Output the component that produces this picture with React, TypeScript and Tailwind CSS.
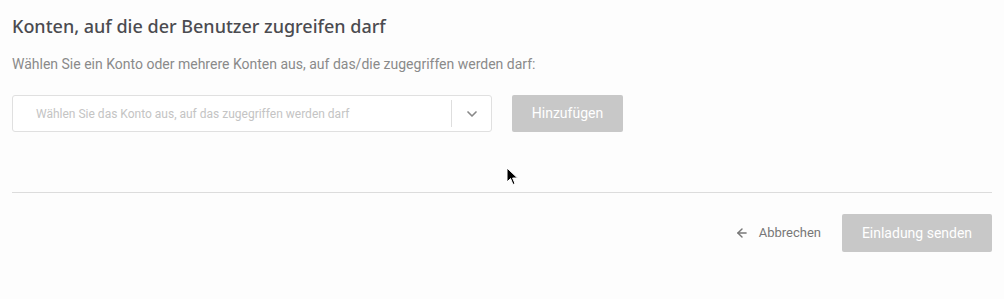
import { ChevronDown, ArrowLeft } from 'lucide-react';

export default function App() {
  return (
    <div
      className="relative w-[1004px] h-[299px] bg-[#fdfdfd] px-3 pt-[14px]"
      style={{ fontFamily: 'Roboto, "Liberation Sans", sans-serif' }}
    >
      <h1
        className="text-[18px] leading-[24px] font-medium text-[#4b4b50]"
        style={{ fontFamily: '"Noto Sans", Roboto, sans-serif' }}
      >
        Konten, auf die der Benutzer zugreifen darf
      </h1>
      <p className="mt-[16px] text-[14px] leading-[20px] text-[#8a8a8a]">
        Wählen Sie ein Konto oder mehrere Konten aus, auf das/die zugegriffen werden darf:
      </p>

      <div className="mt-[21px] flex items-center gap-5">
        <div className="flex h-[37px] w-[480px] items-center rounded-[3px] border border-[#e0e0e0] bg-white">
          <div className="flex-1 pl-[23px] text-[12px] text-[#c4c4c4]">
            Wählen Sie das Konto aus, auf das zugegriffen werden darf
          </div>
          <div className="h-[27px] w-px bg-[#dedede]" />
          <div className="flex w-[39px] justify-center text-[#888]">
            <ChevronDown className="h-4 w-4" strokeWidth={2.5} />
          </div>
        </div>
        <button className="h-[37px] w-[111px] rounded-[2px] bg-[#c8c8c8] text-[14px] text-white">
          Hinzufügen
        </button>
      </div>

      <div className="mt-[60px] h-px w-[980px] bg-[#dcdcdc]" />

      <div className="mt-[21px] flex items-center justify-end w-[980px]">
        <button className="flex items-center gap-[10px] text-[13px] text-[#777]">
          <ArrowLeft className="h-[14px] w-[14px]" strokeWidth={2.5} />
          Abbrechen
        </button>
        <button className="ml-[21px] h-[38px] w-[150px] rounded-[2px] bg-[#c8c8c8] text-[14px] text-white">
          Einladung senden
        </button>
      </div>

      <svg
        className="absolute left-[506px] top-[167px]"
        width="14"
        height="20"
        viewBox="0 0 14 20"
      >
        <path
          d="M1 1 L1 15 L4.5 11.5 L7 17.5 L9 16.6 L6.6 11 L11.5 11 Z"
          fill="#000"
          stroke="#fff"
          strokeWidth="1"
        />
      </svg>
    </div>
  );
}
